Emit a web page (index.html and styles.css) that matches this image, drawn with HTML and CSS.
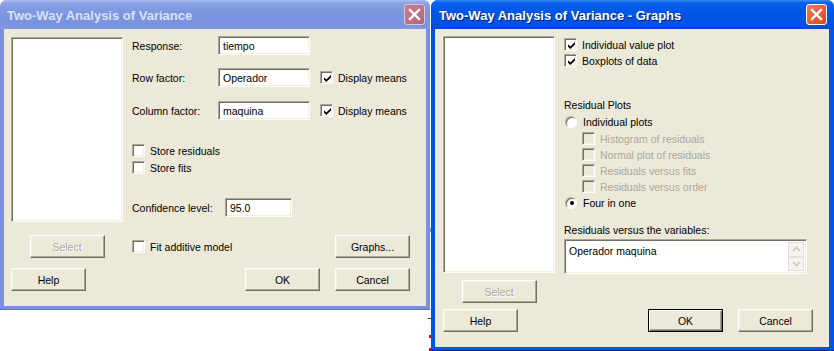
FILE: index.html
```html
<!DOCTYPE html>
<html lang="en">
<head>
  <meta charset="UTF-8">
  <title>Two-Way Analysis of Variance</title>
  <link rel="stylesheet" href="styles.css">
</head>
<body>
  <div class="desktop">
    <span class="mark mark-blue"></span>
    <span class="mark mark-line"></span>
    <span class="mark mark-red1"></span>
    <span class="mark mark-red2"></span>

    <!-- main dialog (inactive) -->
    <div class="window inactive win-main">
      <div class="titlebar">
        <span class="title">Two-Way Analysis of Variance</span>
        <span class="close"><svg width="21" height="21" viewBox="0 0 21 21"><path d="M6 6L15 15M15 6L6 15" stroke="#fff" stroke-width="2.4" stroke-linecap="square"/></svg></span>
      </div>
      <div class="body">
        <div class="top">
          <div class="listbox list-main"></div>
          <div class="form">
            <div class="field">
              <span class="lbl lbl-86">Response:</span>
              <span class="edit">tiempo</span>
            </div>
            <div class="field mt13">
              <span class="lbl lbl-86">Row factor:</span>
              <span class="edit">Operador</span>
              <span class="check-item ml10"><span class="cb"><svg width="7" height="7" viewBox="0 0 7 7"><path d="M0 2.3L2.3 4.6L7 0V2.4L2.3 7L0 4.7Z"/></svg></span>Display means</span>
            </div>
            <div class="field mt14">
              <span class="lbl lbl-86">Column factor:</span>
              <span class="edit">maquina</span>
              <span class="check-item ml10"><span class="cb"><svg width="7" height="7" viewBox="0 0 7 7"><path d="M0 2.3L2.3 4.6L7 0V2.4L2.3 7L0 4.7Z"/></svg></span>Display means</span>
            </div>
            <div class="check-item mt24"><span class="cb"></span>Store residuals</div>
            <div class="check-item mt4"><span class="cb"></span>Store fits</div>
            <div class="field mt24">
              <span class="lbl lbl-93">Confidence level:</span>
              <span class="edit edit-short">95.0</span>
            </div>
          </div>
        </div>
        <div class="row row-select">
          <div class="under-list"><span class="btn disabled">Select</span></div>
          <span class="check-item"><span class="cb"></span>Fit additive model</span>
          <span class="btn push-right">Graphs...</span>
        </div>
        <div class="row row-buttons">
          <span class="btn">Help</span>
          <span class="btn push-right">OK</span>
          <span class="btn">Cancel</span>
        </div>
      </div>
    </div>

    <!-- graphs dialog (active) -->
    <div class="window active win-graphs">
      <div class="titlebar">
        <span class="title">Two-Way Analysis of Variance - Graphs</span>
        <span class="close"><svg width="21" height="21" viewBox="0 0 21 21"><path d="M6 6L15 15M15 6L6 15" stroke="#fff" stroke-width="2.4" stroke-linecap="square"/></svg></span>
      </div>
      <div class="body">
        <div class="top">
          <div class="listbox list-graphs"></div>
          <div class="form">
            <div class="check-item mt2"><span class="cb"><svg width="7" height="7" viewBox="0 0 7 7"><path d="M0 2.3L2.3 4.6L7 0V2.4L2.3 7L0 4.7Z"/></svg></span>Individual value plot</div>
            <div class="check-item mt3"><span class="cb"><svg width="7" height="7" viewBox="0 0 7 7"><path d="M0 2.3L2.3 4.6L7 0V2.4L2.3 7L0 4.7Z"/></svg></span>Boxplots of data</div>
            <div class="text-line mt32">Residual Plots</div>
            <div class="check-item mt3"><span class="radio"></span>Individual plots</div>
            <div class="sub-options">
              <div class="check-item off"><span class="cb"></span>Histogram of residuals</div>
              <div class="check-item off"><span class="cb"></span>Normal plot of residuals</div>
              <div class="check-item off"><span class="cb"></span>Residuals versus fits</div>
              <div class="check-item off"><span class="cb"></span>Residuals versus order</div>
            </div>
            <div class="check-item mt3"><span class="radio on"><span class="dot"></span></span>Four in one</div>
            <div class="text-line mt15">Residuals versus the variables:</div>
            <div class="memo">
              <span class="memo-text">Operador maquina</span>
              <span class="spin">
                <span class="arrow"><svg width="9" height="6" viewBox="0 0 9 6"><path d="M1 5L4.5 1.5L8 5" fill="none" stroke="#c9c7ba" stroke-width="1.6"/></svg></span>
                <span class="arrow"><svg width="9" height="6" viewBox="0 0 9 6"><path d="M1 1L4.5 4.5L8 1" fill="none" stroke="#c9c7ba" stroke-width="1.6"/></svg></span>
              </span>
            </div>
          </div>
        </div>
        <div class="row row-select2">
          <div class="under-list"><span class="btn disabled">Select</span></div>
        </div>
        <div class="row row-buttons2">
          <span class="btn">Help</span>
          <span class="btn default push-right">OK</span>
          <span class="btn">Cancel</span>
        </div>
      </div>
    </div>
  </div>
</body>
</html>
```

FILE: styles.css
```css
body {
  margin: 0;
  background: #fff;
  font-family: 'Liberation Sans', Arial, sans-serif;
  font-size: 10.5px;
  color: #000;
}
.desktop {
  position: relative;
  width: 834px;
  height: 351px;
  overflow: hidden;
  background: #fff;
}
.mark {
  position: absolute;
}
.mark-blue { left: 429px; top: 228px; width: 3px; height: 4px; background: #7b90e0; }
.mark-line { left: 428px; top: 318px; width: 4px; height: 1px; background: #333; }
.mark-red1 { left: 429px; top: 335px; width: 2px; height: 3px; background: #e00; }
.mark-red2 { left: 429px; top: 348px; width: 2px; height: 3px; background: #e00; }

/* window frames */
.window {
  position: absolute;
  top: 0;
  display: flex;
  flex-direction: column;
  box-sizing: border-box;
  border-radius: 7px 7px 0 0;
}
.win-main {
  left: 0;
  width: 430px;
  height: 310px;
  background: #7b90e0;
  border-bottom: 1px solid #5d6fcd;
}
.win-graphs {
  left: 431px;
  width: 403px;
  height: 351px;
  background: #0053e8;
  border-bottom: 1px solid #0027a8;
}
.titlebar {
  height: 29px;
  flex: none;
  display: flex;
  align-items: center;
  padding: 0 5px 0 7px;
  border-radius: 7px 7px 0 0;
}
.inactive .titlebar {
  background: linear-gradient(#a9bdf0 0, #8aa3e6 3px, #7c96e0 12px, #7a93de 24px, #8099e1 29px);
}
.active .titlebar {
  background: linear-gradient(#3c8cf8 0, #0a5fec 3px, #0056e6 12px, #0052e2 24px, #0049d6 29px);
  padding: 0 7px 0 8px;
}
.title {
  font-weight: bold;
  font-size: 13px;
  flex: 1;
  padding-top: 1px;
}
.inactive .title { color: #d8e2f8; }
.active .title {
  color: #fff;
  text-shadow: 1px 1px #0a1b7a;
}
.close {
  width: 21px;
  height: 21px;
  box-sizing: border-box;
  border-radius: 3px;
  display: flex;
}
.close svg {
  margin: -1px;
}
.inactive .close {
  background: linear-gradient(135deg, #c87e91, #b4647a);
  border: 1px solid #e0c4d2;
}
.active .close {
  background: linear-gradient(135deg, #f07a5a, #d9461f);
  border: 1px solid #fff;
}

.body {
  flex: 1;
  background: #ece9d8;
  margin: 0 4px 3px 4px;
  box-sizing: border-box;
}
.win-main .body {
  padding: 7px 16px 0 7px;
}
.win-graphs .body {
  margin-right: 5px;
  padding: 7px 16px 0 8px;
}

/* layout */
.top {
  display: flex;
  gap: 9px;
}
.form {
  display: flex;
  flex-direction: column;
  align-items: flex-start;
}
.field {
  display: flex;
  align-items: center;
  height: 19px;
}
.row {
  display: flex;
  align-items: center;
}
.under-list {
  width: 112px;
  display: flex;
  justify-content: center;
  margin-right: 9px;
}
.push-right { margin-left: auto; }
.row-select { margin-top: 13px; }
.row-buttons { margin-top: 10px; gap: 15px; }
.row-buttons .push-right { margin-left: auto; }
.row-select2 { margin-top: 6px; }
.row-buttons2 { margin-top: 6px; gap: 15px; }

.mt2 { margin-top: 2px; }
.mt3 { margin-top: 3px; }
.mt4 { margin-top: 4px; }
.mt13 { margin-top: 13px; }
.mt14 { margin-top: 14px; }
.mt15 { margin-top: 15px; }
.mt24 { margin-top: 24px; }
.mt32 { margin-top: 32px; }
.ml10 { margin-left: 10px; }

/* controls */
.listbox {
  width: 112px;
  box-sizing: border-box;
  background: #fff;
  border: 1px solid;
  border-color: #aca899 #fff #fff #aca899;
  box-shadow: inset 1px 1px #716f64, inset -1px -1px #f1efe2;
  flex: none;
}
.list-main { height: 185px; margin-top: 1px; }
.list-graphs { height: 237px; }

.lbl { display: inline-block; }
.lbl-86 { width: 86px; }
.lbl-93 { width: 93px; }

.edit {
  width: 92px;
  height: 19px;
  box-sizing: border-box;
  background: #fff;
  border: 1px solid;
  border-color: #aca899 #fff #fff #aca899;
  box-shadow: inset 1px 1px #716f64, inset -1px -1px #f1efe2;
  padding: 3px 0 0 4px;
  line-height: 13px;
}
.edit-short { width: 67px; }

.check-item {
  display: flex;
  align-items: center;
  height: 13px;
  white-space: nowrap;
}
.cb {
  width: 13px;
  height: 13px;
  box-sizing: border-box;
  background: #fff;
  border: 1px solid;
  border-color: #aca899 #fff #fff #aca899;
  box-shadow: inset 1px 1px #716f64, inset -1px -1px #f1efe2;
  display: flex;
  align-items: center;
  justify-content: center;
  margin-right: 5px;
  flex: none;
}
.cb svg {
  margin: 1px 0 0 1px;
}
.off { color: #aca899; }
.off .cb { background: #ece9d8; }

.radio {
  width: 12px;
  height: 12px;
  box-sizing: border-box;
  border-radius: 50%;
  background: #fff;
  border: 1px solid;
  border-color: #aca899 #fff #fff #aca899;
  box-shadow: inset 1px 1px #716f64;
  margin: 0 6px 0 1px;
  display: flex;
  align-items: center;
  justify-content: center;
  flex: none;
}
.radio .dot {
  width: 4px;
  height: 4px;
  border-radius: 50%;
  background: #000;
  margin: 1px 0 0 1px;
}
.text-line {
  height: 13px;
  line-height: 13px;
}
.sub-options {
  display: flex;
  flex-direction: column;
  gap: 3px;
  margin: 4px 0 0 18px;
}

.memo {
  margin-top: 2px;
  width: 243px;
  height: 35px;
  box-sizing: border-box;
  background: #fff;
  border: 1px solid;
  border-color: #aca899 #fff #fff #aca899;
  box-shadow: inset 1px 1px #716f64, inset -1px -1px #f1efe2;
  display: flex;
  justify-content: space-between;
  padding: 2px 2px 2px 4px;
}
.memo-text {
  padding-top: 3px;
  line-height: 13px;
}
.spin {
  display: flex;
  flex-direction: column;
}
.arrow {
  width: 16px;
  height: 15px;
  box-sizing: border-box;
  background: #f4f3ee;
  border: 1px solid #e3e1d6;
  display: flex;
  align-items: center;
  justify-content: center;
}

.btn {
  width: 75px;
  height: 23px;
  box-sizing: border-box;
  display: inline-flex;
  align-items: center;
  justify-content: center;
  background: #ece9d8;
  border: 1px solid;
  border-color: #fff #716f64 #716f64 #fff;
  box-shadow: inset -1px -1px #aca899, inset 1px 1px #f1efe2;
  flex: none;
}
.btn.default {
  border-color: #000;
  box-shadow: inset 1px 1px #fff, inset -1px -1px #716f64, inset -2px -2px #aca899;
}
.btn.disabled {
  color: #aca899;
  text-shadow: 1px 1px #fff;
}
```
